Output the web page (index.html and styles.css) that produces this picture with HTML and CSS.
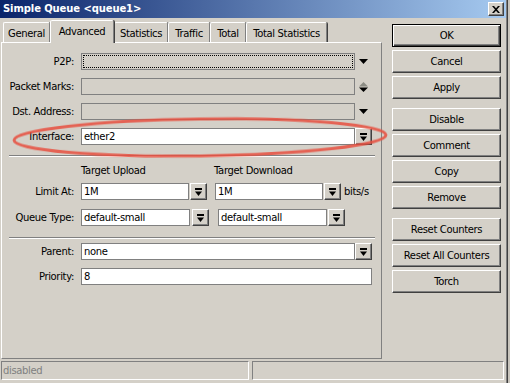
FILE: index.html
```html
<!DOCTYPE html>
<html>
<head>
<meta charset="utf-8">
<title>Simple Queue</title>
<link rel="stylesheet" href="styles.css">
</head>
<body>
<div class="screen">
  <div class="window">
    <div class="titlebar">
      <span class="title">Simple Queue &lt;queue1&gt;</span>
      <span class="close"><svg width="8" height="7" viewBox="0 0 8 7"><path d="M0 0h2l2 2.3L6 0h2L5 3.5 8 7H6L4 4.7 2 7H0l3-3.5z" fill="#000"/></svg></span>
    </div>
    <div class="content">
      <div class="left">
        <div class="tabs">
          <div class="tab t1">General</div>
          <div class="tab t2 active">Advanced</div>
          <div class="tab t3">Statistics</div>
          <div class="tab t4">Traffic</div>
          <div class="tab t5">Total</div>
          <div class="tab t6">Total Statistics</div>
        </div>
        <div class="panel">
          <div class="row r1">
            <span class="lbl">P2P:</span>
            <div class="field off focus wide"></div>
            <span class="arr"><svg width="9" height="5" viewBox="0 0 9 5"><path d="M0 0h9L4.5 5z" fill="#000"/></svg></span>
          </div>
          <div class="row r2">
            <span class="lbl">Packet Marks:</span>
            <div class="field off wide"></div>
            <span class="arr stack"><svg width="9" height="10" viewBox="0 0 9 10"><path d="M0 4.5h9L4.5 0z" fill="#8c8c84"/><path d="M0 5.5h9L4.5 10z" fill="#000"/></svg></span>
          </div>
          <div class="row r3">
            <span class="lbl">Dst. Address:</span>
            <div class="field off wide"></div>
            <span class="arr"><svg width="9" height="5" viewBox="0 0 9 5"><path d="M0 0h9L4.5 5z" fill="#000"/></svg></span>
          </div>
          <div class="row r4">
            <span class="lbl">Interface:</span>
            <div class="field wide">ether2</div>
            <span class="dd"><svg width="7" height="8" viewBox="0 0 7 8"><rect x="0" y="0" width="7" height="2" fill="#000"/><path d="M0 3.5h7L3.5 8z" fill="#000"/></svg></span>
          </div>
          <div class="sep s1"></div>
          <div class="row heads">
            <span class="lbl"></span>
            <span class="head h1">Target Upload</span>
            <span class="head">Target Download</span>
          </div>
          <div class="row r5">
            <span class="lbl">Limit At:</span>
            <div class="field small">1M</div>
            <span class="dd g1"><svg width="7" height="8" viewBox="0 0 7 8"><rect x="0" y="0" width="7" height="2" fill="#000"/><path d="M0 3.5h7L3.5 8z" fill="#000"/></svg></span>
            <div class="field small g2">1M</div>
            <span class="dd g1"><svg width="7" height="8" viewBox="0 0 7 8"><rect x="0" y="0" width="7" height="2" fill="#000"/><path d="M0 3.5h7L3.5 8z" fill="#000"/></svg></span>
            <span class="unit">bits/s</span>
          </div>
          <div class="row r6">
            <span class="lbl">Queue Type:</span>
            <div class="field small2">default-small</div>
            <span class="dd g3"><svg width="7" height="8" viewBox="0 0 7 8"><rect x="0" y="0" width="7" height="2" fill="#000"/><path d="M0 3.5h7L3.5 8z" fill="#000"/></svg></span>
            <div class="field small2 g4">default-small</div>
            <span class="dd g5"><svg width="7" height="8" viewBox="0 0 7 8"><rect x="0" y="0" width="7" height="2" fill="#000"/><path d="M0 3.5h7L3.5 8z" fill="#000"/></svg></span>
          </div>
          <div class="sep s2"></div>
          <div class="row r7">
            <span class="lbl">Parent:</span>
            <div class="field wide">none</div>
            <span class="dd"><svg width="7" height="8" viewBox="0 0 7 8"><rect x="0" y="0" width="7" height="2" fill="#000"/><path d="M0 3.5h7L3.5 8z" fill="#000"/></svg></span>
          </div>
          <div class="row r8">
            <span class="lbl">Priority:</span>
            <div class="field full">8</div>
          </div>
        </div>
      </div>
      <div class="buttons">
        <div class="btn default">OK</div>
        <div class="btn">Cancel</div>
        <div class="btn">Apply</div>
        <div class="btn grp">Disable</div>
        <div class="btn">Comment</div>
        <div class="btn">Copy</div>
        <div class="btn">Remove</div>
        <div class="btn grp">Reset Counters</div>
        <div class="btn">Reset All Counters</div>
        <div class="btn">Torch</div>
      </div>
    </div>
    <div class="status">
      <div class="seg sa">disabled</div>
      <div class="seg sb"></div>
    </div>
  </div>
  <div class="edge"></div>
  <svg class="mark" width="510" height="383" viewBox="0 0 510 383">
    <defs><filter id="soft" x="-5%" y="-50%" width="110%" height="200%"><feGaussianBlur stdDeviation="0.7"/></filter></defs>
    <ellipse cx="200" cy="137.5" rx="186" ry="18.5" transform="rotate(-0.8 200 137.5)" fill="none" stroke="#e8503f" stroke-width="3" stroke-opacity="0.85" filter="url(#soft)"/>
  </svg>
</div>
</body>
</html>
```
FILE: styles.css
```css
* { box-sizing: border-box; }
html, body {
  margin: 0;
  padding: 0;
  background: #d4d0c8;
  width: 510px;
  height: 383px;
  overflow: hidden;
  font-family: "DejaVu Sans", "Liberation Sans", sans-serif;
  font-size: 10px;
  letter-spacing: -0.35px;
  color: #000;
}
.screen {
  position: relative;
  width: 510px;
  height: 383px;
  display: flex;
}
.window {
  width: 506px;
  display: flex;
  flex-direction: column;
}
.edge {
  width: 4px;
  border-left: 1px solid #808080;
  box-shadow: inset 1px 0 #404040;
  background: #c8c4bc;
}
.titlebar {
  height: 18px;
  background: linear-gradient(to right, #0a246a, #a6caf0);
  display: flex;
  align-items: center;
  justify-content: space-between;
  padding: 0 2px 0 3px;
}
.title {
  color: #fff;
  font-weight: bold;
  font-size: 10px;
  line-height: 18px;
  letter-spacing: -0.1px;
}
.close {
  width: 16px;
  height: 14px;
  background: #d4d0c8;
  border: 1px solid;
  border-color: #fff #404040 #404040 #fff;
  box-shadow: inset -1px -1px #808080;
  display: flex;
  align-items: center;
  justify-content: center;
}
.content {
  display: flex;
  margin-top: 2px;
}
.left {
  width: 381px;
  margin-left: 1px;
  display: flex;
  flex-direction: column;
}
.tabs {
  height: 22px;
  display: flex;
  align-items: flex-end;
  padding-left: 2px;
}
.tab {
  height: 20px;
  border: 1px solid;
  border-bottom: none;
  border-color: #fff #808080 transparent #fff;
  border-radius: 2px 2px 0 0;
  box-shadow: 1px 0 #404040;
  display: flex;
  align-items: center;
  justify-content: center;
  padding-top: 2px;
  white-space: nowrap;
}
.tab.active {
  height: 23px;
  margin-bottom: -1px;
  background: #d4d0c8;
  position: relative;
  z-index: 2;
  padding-top: 0;
  padding-bottom: 2px;
}
.t1 { width: 47px; }
.t2 { width: 64px; }
.t3 { width: 54px; }
.t4 { width: 42px; }
.t5 { width: 36px; }
.t6 { width: 81px; }
.panel {
  height: 317px;
  border: 1px solid;
  border-color: #fff #808080 #808080 #fff;
  display: flex;
  flex-direction: column;
  padding-top: 10px;
}
.row {
  height: 17px;
  display: flex;
  align-items: center;
  flex-shrink: 0;
}
.r2, .r3, .r4 { margin-top: 8px; }
.lbl {
  width: 72px;
  margin-right: 7px;
  text-align: right;
  white-space: nowrap;
  flex-shrink: 0;
}
.field {
  height: 17px;
  border: 1px solid #808080;
  background: #fff;
  padding-left: 2px;
  line-height: 15px;
  white-space: nowrap;
  flex-shrink: 0;
}
.field.off { background: #d4d0c8; }
.field.focus {
  outline: 1px dotted #000;
  outline-offset: -3px;
}
.wide { width: 274px; }
.full { width: 291px; }
.small { width: 108px; }
.small2 { width: 109px; }
.g2 { margin-left: 8px; }
.g3 { margin-left: 2px; }
.g4 { margin-left: 9px; }
.g5 { margin-left: 1px; }
.arr {
  width: 17px;
  height: 17px;
  display: flex;
  align-items: center;
  justify-content: center;
  padding-right: 1px;
}
.dd {
  width: 17px;
  height: 17px;
  border: 1px solid;
  border-color: #fff #404040 #404040 #fff;
  box-shadow: inset -1px -1px #808080;
  background: #d4d0c8;
  display: flex;
  align-items: center;
  justify-content: center;
  flex-shrink: 0;
}
.g1 { margin-left: 1px; }
.unit { margin-left: 3px; }
.sep {
  height: 2px;
  margin-left: 7px;
  width: 366px;
  border-top: 1px solid #808080;
  border-bottom: 1px solid #fff;
  flex-shrink: 0;
}
.s1 { margin-top: 10px; }
.heads {
  height: 16px;
  margin-top: 5px;
}
.head { white-space: nowrap; }
.h1 { width: 133px; }
.r5 { margin-top: 5px; }
.r6 { margin-top: 9px; }
.s2 { margin-top: 11px; }
.r7 { margin-top: 4px; }
.r8 { margin-top: 8px; }
.buttons {
  margin-left: 10px;
  margin-top: 4px;
  width: 109px;
  display: flex;
  flex-direction: column;
  gap: 3px;
}
.btn {
  height: 23px;
  border: 1px solid;
  border-color: #fff #404040 #404040 #fff;
  box-shadow: inset -1px -1px #808080;
  display: flex;
  align-items: center;
  justify-content: center;
  white-space: nowrap;
}
.btn.default {
  border-color: #000;
  box-shadow: inset 1px 1px #fff, inset -1px -1px #404040, inset -2px -2px #808080;
}
.btn.grp { margin-top: 6px; }
.status {
  margin-top: 2px;
  height: 19px;
  display: flex;
  gap: 3px;
  padding-left: 1px;
}
.seg {
  height: 19px;
  border: 1px solid;
  border-color: #808080 #fff #fff #808080;
  color: #808080;
  padding-left: 1px;
  line-height: 17px;
}
.sa { width: 248px; }
.sb { width: 252px; }
.mark {
  position: absolute;
  left: 0;
  top: 0;
  pointer-events: none;
}
```
